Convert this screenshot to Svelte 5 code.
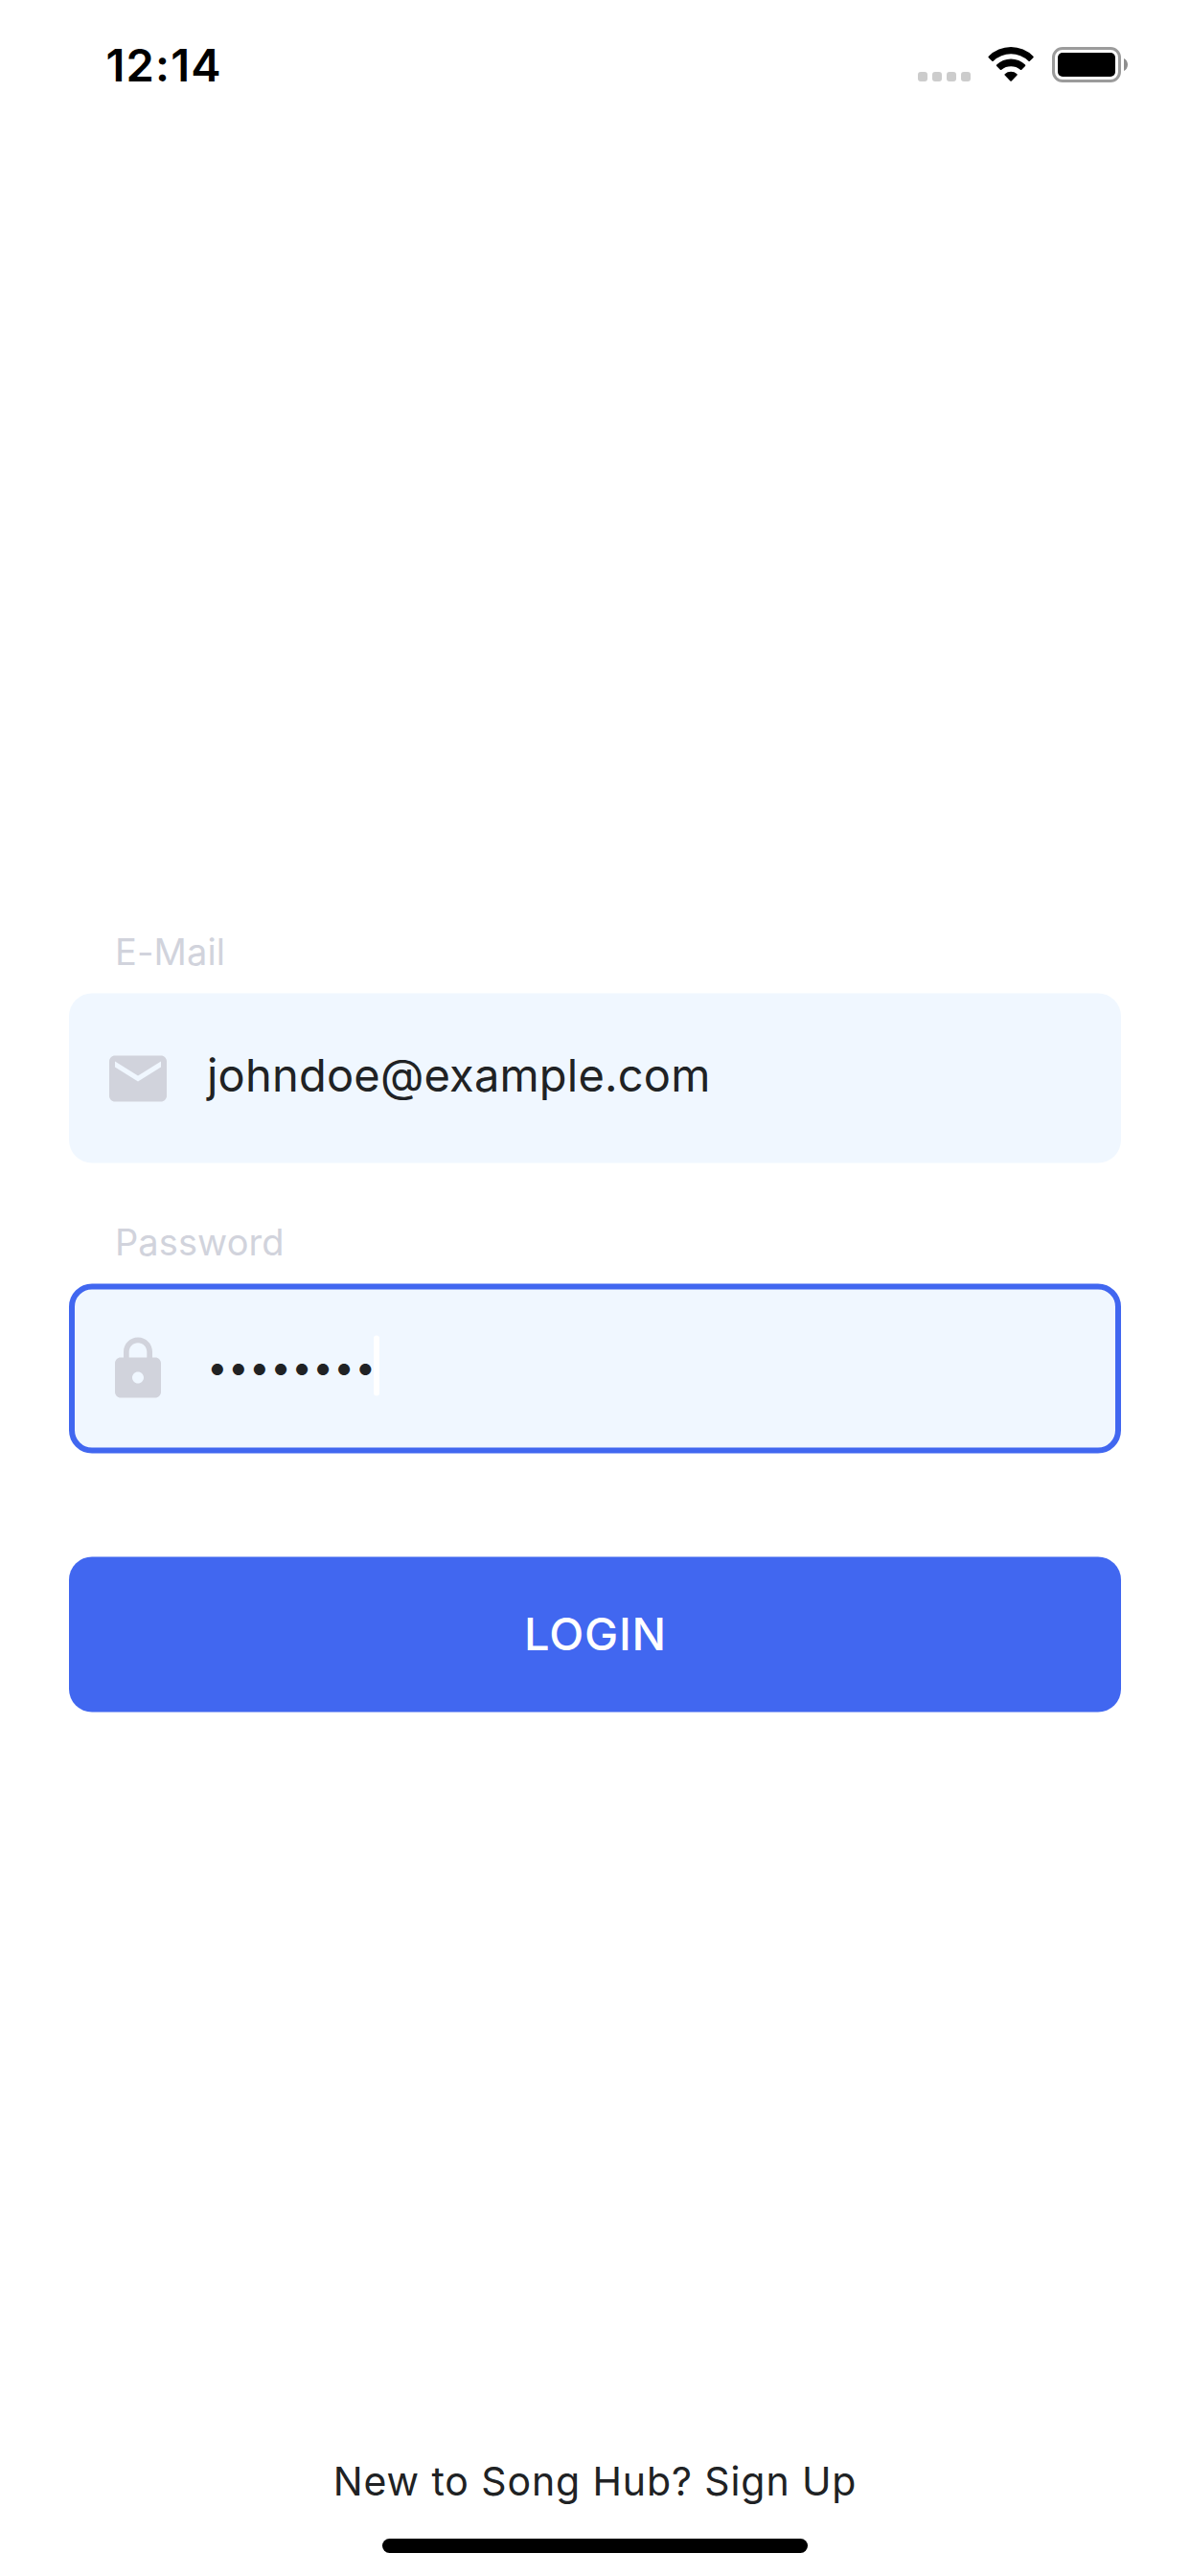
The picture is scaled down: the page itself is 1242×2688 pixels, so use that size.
<script>
  let email = $state('johndoe@example.com');
  let password = $state('••••••••');
</script>

<div class="screen">
  <header class="status">
    <span class="time">12:14</span>
    <div class="signals">
      <div class="cell"><i></i><i></i><i></i><i></i></div>
      <svg class="wifi" width="48" height="37" viewBox="0 0 48 37">
        <g transform="translate(24.1 0)">
          <path d="M-23.3 9.8A32.8 32.8 0 0 1 23.3 9.8Q24 10.5 23.3 11.2L19.7 14.8Q19.1 15.4 18.4 14.8A26.5 26.5 0 0 0-18.4 14.8Q-19.1 15.4-19.7 14.8L-23.3 11.2Q-24 10.5-23.3 9.8Z" />
          <path d="M-14.9 18.6A21.2 21.2 0 0 1 14.9 18.6Q15.6 19.3 14.9 20L11.2 23.7Q10.5 24.4 9.8 23.8A15.6 15.6 0 0 0-9.8 23.8Q-10.5 24.4-11.2 23.7L-14.9 20Q-15.6 19.3-14.9 18.6Z" />
          <path d="M-6.4 28.2A9.8 9.8 0 0 1 6.4 28.2Q7.1 28.9 6.4 29.5L.7 35.4Q0 36.1-.7 35.4L-6.4 29.5Q-7.1 28.9-6.4 28.2Z" />
        </g>
      </svg>
      <div class="battery">
        <div class="shell"><div class="charge"></div></div>
        <svg width="4" height="13" viewBox="0 0 4 13"><path d="M0 0C2.4 1 4 3.6 4 6.5S2.4 12 0 13Z" fill="#8e8e8e" /></svg>
      </div>
    </div>
  </header>

  <main class="form">
    <span class="label">E-Mail</span>
    <div class="field">
      <svg class="icon" viewBox="0 0 24 24"><path d="M20 4H4c-1.1 0-1.99.9-1.99 2L2 18c0 1.1.9 2 2 2h16c1.1 0 2-.9 2-2V6c0-1.1-.9-2-2-2zm0 4l-8 5-8-5V6l8 5 8-5v2z" /></svg>
      <span class="value">{email}</span>
    </div>

    <span class="label second">Password</span>
    <div class="field focused">
      <svg class="icon" viewBox="0 0 24 24"><path d="M18 8h-1V6c0-2.76-2.24-5-5-5S7 3.24 7 6v2H6c-1.1 0-2 .9-2 2v10c0 1.1.9 2 2 2h12c1.1 0 2-.9 2-2V10c0-1.1-.9-2-2-2zm-6 9c-1.1 0-2-.9-2-2s.9-2 2-2 2 .9 2 2-.9 2-2 2zm3.1-9H8.9V6c0-1.71 1.39-3.1 3.1-3.1 1.71 0 3.1 1.39 3.1 3.1v2z" /></svg>
      <span class="value dots">{password}</span>
      <span class="caret"></span>
    </div>

    <button class="login" type="button">LOGIN</button>
  </main>

  <footer class="bottom">
    <span class="signup">New to Song Hub? Sign Up</span>
    <div class="home"></div>
  </footer>
</div>

<style>
  :global(body) {
    background: #fff;
  }
  .screen {
    width: 1242px;
    height: 2688px;
    display: flex;
    flex-direction: column;
    box-sizing: border-box;
    background: #fff;
    font-family: Inter, 'Liberation Sans', sans-serif;
    color: #202224;
    overflow: hidden;
    white-space: nowrap;
  }
  .status {
    display: flex;
    justify-content: space-between;
    align-items: flex-start;
    height: 132px;
    padding: 49px 65px 0 110.5px;
    box-sizing: border-box;
    color: #000;
  }
  .time {
    font-size: 47px;
    font-weight: 600;
    line-height: 37px;
    letter-spacing: 1.2px;
  }
  .signals {
    display: flex;
    align-items: flex-end;
    height: 37px;
  }
  .cell {
    display: flex;
    gap: 5px;
    margin: 0 18px 1px 0;
  }
  .cell i {
    width: 10px;
    height: 10px;
    border-radius: 3px;
    background: #ccc;
  }
  .wifi {
    margin-right: 19px;
  }
  .battery {
    display: flex;
    align-items: center;
    gap: 3px;
  }
  .shell {
    width: 72px;
    height: 37px;
    box-sizing: border-box;
    border: 3px solid #9b9b9b;
    border-radius: 11px;
    padding: 3px;
  }
  .charge {
    height: 25px;
    border-radius: 5px;
    background: #000;
  }
  .form {
    display: flex;
    flex-direction: column;
    padding: 838px 72px 0;
    transform: translateY(0.5px);
  }
  .label {
    font-size: 38px;
    line-height: 45px;
    height: 66px;
    margin-left: 48px;
    letter-spacing: 0.1px;
    color: #d1d3dc;
  }
  .second {
    margin-top: 60px;
  }
  .field {
    display: flex;
    align-items: center;
    height: 177px;
    box-sizing: border-box;
    padding-left: 36px;
    border-radius: 24px;
    background: #f0f7ff;
  }
  .focused {
    border: 6px solid #4167f0;
    padding-left: 30px;
  }
  .icon {
    width: 72px;
    height: 72px;
    flex: none;
    fill: #d1d3dc;
    margin-right: 36px;
  }
  .value {
    font-size: 47px;
    line-height: 60px;
    letter-spacing: 0.2px;
    padding-bottom: 7px;
  }
  .dots {
    width: 174px;
    font-size: 38.5px;
    letter-spacing: 0.4px;
    padding-bottom: 5px;
  }
  .caret {
    width: 6px;
    height: 63px;
    margin-bottom: 6px;
    border-radius: 3px;
    background: #fff;
  }
  .login {
    height: 162px;
    margin-top: 108px;
    border: 0;
    border-radius: 24px;
    padding: 0 0 3px 1px;
    background: #4167f0;
    color: #fff;
    font-family: inherit;
    font-size: 47px;
    font-weight: 500;
    letter-spacing: 0.8px;
  }
  .bottom {
    display: flex;
    flex-direction: column;
    align-items: center;
    margin-top: auto;
    padding-bottom: 24px;
  }
  .signup {
    font-size: 41px;
    line-height: 50px;
    letter-spacing: 0.9px;
    margin-bottom: 35px;
  }
  .home {
    width: 444px;
    height: 15px;
    border-radius: 8px;
    background: #000;
  }
</style>
